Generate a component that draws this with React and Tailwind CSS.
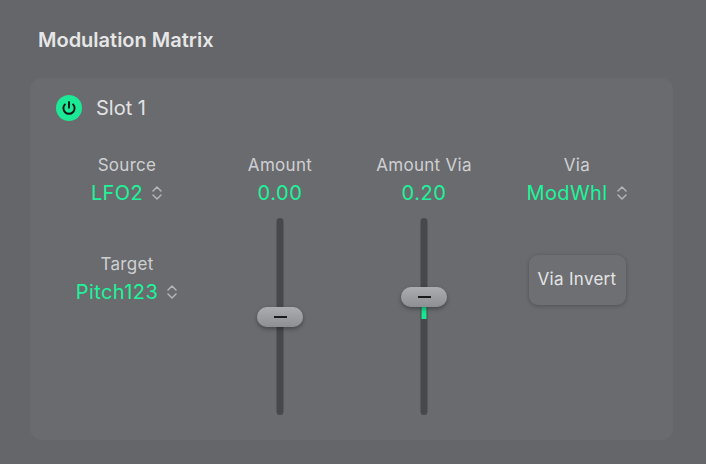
import React from 'react';

function UpDown() {
    return (
        <svg width="12" height="18" viewBox="0 0 12 18" className="ml-[8px]">
            <path d="M2 7 L6 3 L10 7" fill="none" stroke="#b4b5b8" strokeWidth="1.5" strokeLinecap="round" strokeLinejoin="round" />
            <path d="M2 11 L6 15 L10 11" fill="none" stroke="#b4b5b8" strokeWidth="1.5" strokeLinecap="round" strokeLinejoin="round" />
        </svg>
    );
}

function Menu({ label, value, className = '' }) {
    return (
        <div className={`flex flex-col items-center ${className}`}>
            <span className="text-[17px] leading-[20px] tracking-[0.3px] text-[#cfd0d2]">{label}</span>
            <div className="flex items-center mt-[6px]">
                <span className="text-[20px] leading-[24px] tracking-[0.4px] text-[#1cf59a]">{value}</span>
                <UpDown />
            </div>
        </div>
    );
}

// vertical fader; thumbY is the thumb centre measured from the track top
function Fader({ thumbY, fill }) {
    const mid = 101;
    return (
        <div className="relative h-[197px] w-[46px]">
            <div className="absolute left-1/2 -translate-x-1/2 top-0 bottom-0 w-[7px] rounded-full bg-[#47484b]" />
            {fill && (
                <div
                    className="absolute left-1/2 -translate-x-1/2 w-[5px] bg-[#19e592]"
                    style={{ top: thumbY, height: mid - thumbY }}
                />
            )}
            <div
                className="absolute left-0 w-[46px] h-[20px] rounded-[10px] bg-gradient-to-b from-[#acadb0] to-[#8e8f92] shadow-[0_2px_4px_rgba(0,0,0,0.35)] flex items-center justify-center"
                style={{ top: thumbY - 10 }}
            >
                <div className="w-[13px] h-[2px] bg-[#1b1b1c]" />
            </div>
        </div>
    );
}

export default function App() {
    return (
        <div className="w-[706px] h-[464px] bg-[#65666a] overflow-hidden" style={{ fontFamily: 'Inter, "Noto Sans", sans-serif' }}>
            <h1 className="pl-[38px] pt-[27px] text-[20px] leading-[26px] font-semibold text-[#e6e6e7]">Modulation Matrix</h1>

            <div className="ml-[30px] mt-[25px] w-[643px] h-[362px] rounded-[12px] bg-[#6a6b6f]">
                {/* Slot header */}
                <div className="flex items-center pl-[26px] pt-[17px]">
                    <svg width="26" height="26" viewBox="0 0 26 26">
                        <circle cx="13" cy="13" r="13" fill="#1ce996" />
                        <path d="M8.9 9.4 A5.6 5.6 0 1 0 17.1 9.4" fill="none" stroke="#121212" strokeWidth="1.9" strokeLinecap="round" />
                        <path d="M13 7 V12.8" stroke="#121212" strokeWidth="1.9" strokeLinecap="round" />
                    </svg>
                    <span className="ml-[14px] text-[20px] leading-[26px] text-[#e2e2e3]">Slot 1</span>
                </div>

                <div className="flex mt-[34px]">
                    {/* Source / Target */}
                    <div className="w-[194px] flex flex-col items-center">
                        <Menu label="Source" value="LFO2" />
                        <Menu label="Target" value="Pitch123" className="mt-[49px]" />
                    </div>

                    {/* Amount */}
                    <div className="w-[112px] flex flex-col items-center">
                        <span className="text-[17px] leading-[20px] tracking-[0.3px] text-[#cfd0d2]">Amount</span>
                        <span className="mt-[6px] text-[20px] leading-[24px] tracking-[0.6px] text-[#1cf59a]">0.00</span>
                        <div className="mt-[13px]"><Fader thumbY={99} /></div>
                    </div>

                    {/* Amount Via */}
                    <div className="w-[176px] flex flex-col items-center">
                        <span className="text-[17px] leading-[20px] tracking-[0.3px] text-[#cfd0d2]">Amount Via</span>
                        <span className="mt-[6px] text-[20px] leading-[24px] tracking-[0.6px] text-[#1cf59a]">0.20</span>
                        <div className="mt-[13px]"><Fader thumbY={79} fill /></div>
                    </div>

                    {/* Via */}
                    <div className="w-[130px] flex flex-col items-center">
                        <Menu label="Via" value="ModWhl" />
                        <button className="mt-[50px] w-[97px] h-[50px] rounded-[9px] bg-[#6e6f73] shadow-[0_1px_4px_rgba(0,0,0,0.25)] text-[17px] tracking-[0.3px] text-[#e4e4e5]">
                            Via Invert
                        </button>
                    </div>
                </div>
            </div>
        </div>
    );
}
